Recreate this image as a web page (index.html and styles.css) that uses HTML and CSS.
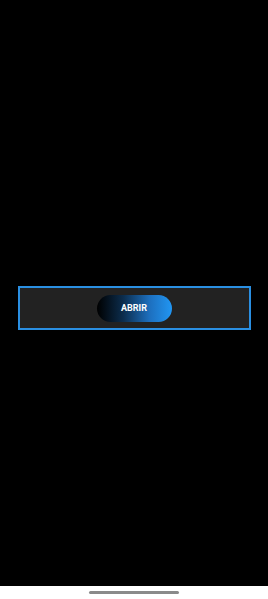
FILE: index.html
```html
<!DOCTYPE html>
<html>
<head>
    <title>Abrir</title>
    <link rel="stylesheet" href="styles.css">
</head>
<body>
    <div class="screen">
        <div class="panel">
            <button type="button" class="btn-open">ABRIR</button>
        </div>
    </div>
    <div class="navbar">
        <span class="handle"></span>
    </div>
</body>
</html>
```

FILE: styles.css
```css
html, body {
    margin: 0;
    height: 100%;
}
body {
    font-family: Roboto, "Liberation Sans", sans-serif;
    background-color: #000;
    display: flex;
    flex-direction: column;
}
.screen {
    flex: 1;
    padding-top: 286px;
    box-sizing: border-box;
}
.panel {
    width: 233px;
    height: 44px;
    margin: 0 auto;
    box-sizing: border-box;
    border: 2.5px solid #2a8fe2;
    background-color: #222;
    display: flex;
    align-items: center;
    justify-content: center;
}
.btn-open {
    width: 75px;
    height: 27px;
    border: none;
    border-radius: 14px;
    background: linear-gradient(to right, #000 0%, #0c2d4d 35%, #1d6fbe 70%, #2196f3 100%);
    color: #fff;
    font-family: Roboto, "Liberation Sans", sans-serif;
    font-weight: bold;
    font-size: 9px;
    padding: 0;
}
.navbar {
    height: 13px;
    background-color: #fff;
    display: flex;
    justify-content: center;
    align-items: flex-start;
}
.handle {
    width: 90px;
    height: 3px;
    margin-top: 5px;
    border-radius: 2px;
    background-color: #8a8a8a;
}
```
